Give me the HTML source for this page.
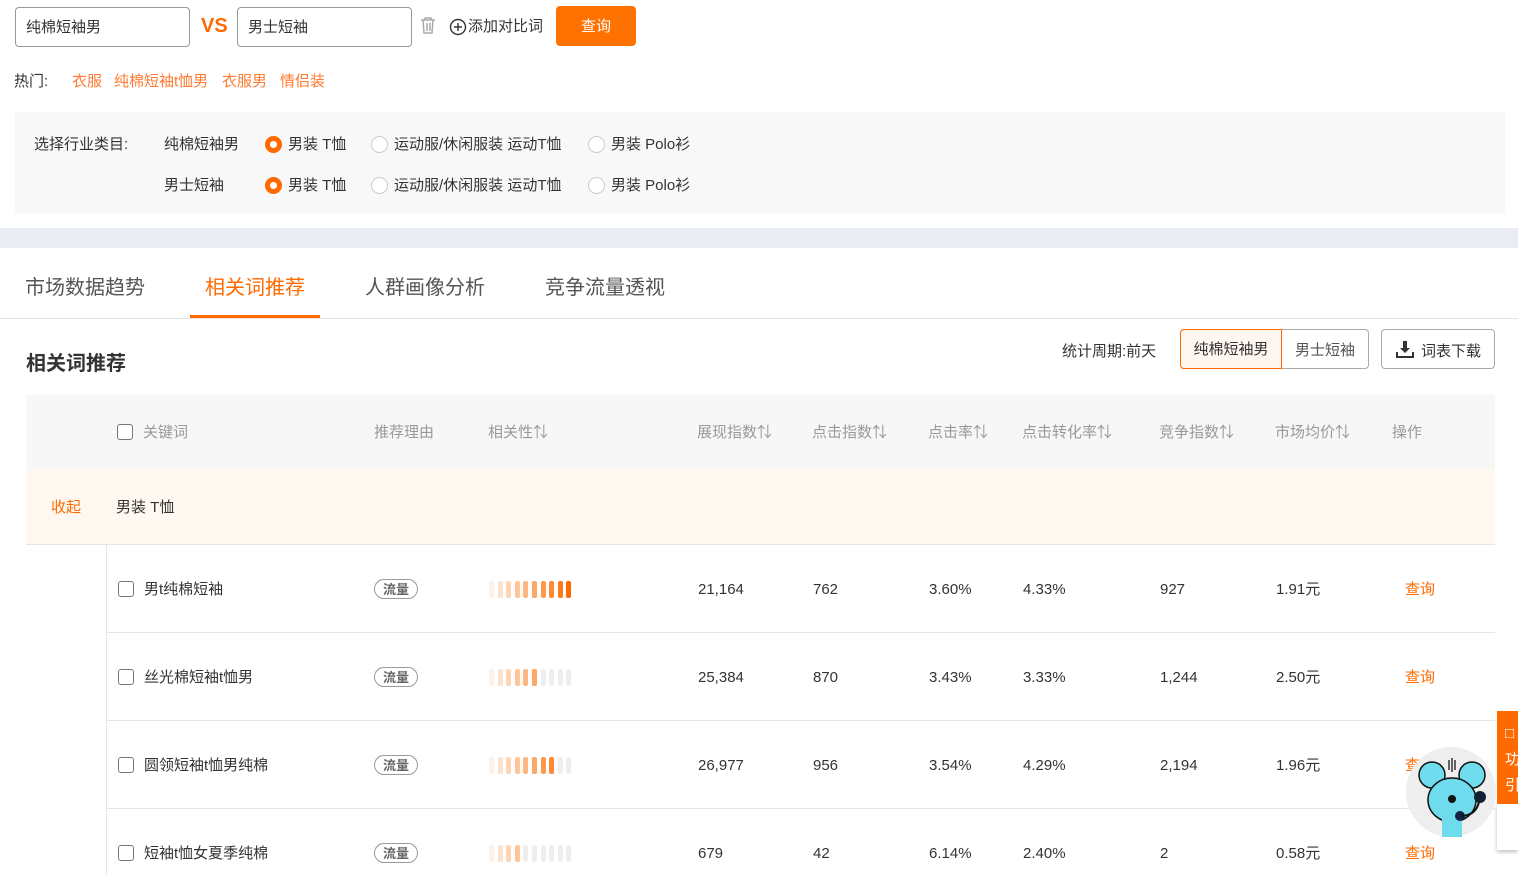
<!DOCTYPE html>
<html><head><meta charset="utf-8"><style>
*{margin:0;padding:0;box-sizing:border-box}
body{width:1518px;height:874px;overflow:hidden;background:#fff;font-family:"Liberation Sans","Noto Sans CJK SC",sans-serif;font-size:15px;line-height:24px;color:#333;position:relative}
.a{position:absolute;white-space:nowrap}
.inp{position:absolute;top:7px;height:40px;width:175px;border:1px solid #999;border-radius:4px;padding:0 10px;line-height:40px;font-size:15px}
.o{color:#ff6a00}
.radio{position:absolute;width:17px;height:17px;border-radius:50%;border:1px solid #ccc;background:#fff}
.radio.on{border:5px solid #ff6a00}
.th{position:absolute;top:421px;color:#999;font-size:15px}
.cb{position:absolute;width:16px;height:16px;border:1px solid #777;border-radius:3px;background:#fff}
.tag{position:absolute;width:44px;height:20px;border:1px solid #999;border-radius:10px;font-size:13px;color:#666;text-align:center;line-height:19px;font-weight:bold}
.bars{position:absolute;height:17px}
.bars i{display:inline-block;width:5px;height:17px;border-radius:2px;margin-right:3.6px;background:#eee;vertical-align:top}
.sep{position:absolute;left:106px;width:1389px;height:1px;background:#e5e5e5}
.t{font-size:20px;line-height:32px}
</style></head><body>
<div class="inp" style="left:15px">纯棉短袖男</div>
<div class="a o" style="left:201px;top:14px;font-size:20px;font-weight:bold">VS</div>
<div class="inp" style="left:237px">男士短袖</div>
<svg class="a" style="left:419px;top:16px" width="18" height="18" viewBox="0 0 18 18" fill="none" stroke="#aaa" stroke-width="1.5"><path d="M2 4h14M6 4V2h6v2M4 4l1 13h8l1-13M8 7v8M11 7v8"/></svg>
<svg class="a" style="left:449px;top:18px" width="18" height="18" viewBox="0 0 18 18" fill="none" stroke="#333" stroke-width="1.4"><circle cx="9" cy="9" r="7.5"/><path d="M9 5v8M5 9h8"/></svg>
<div class="a" style="left:468px;top:15px">添加对比词</div>
<div class="a" style="left:556px;top:6px;width:80px;height:40px;background:#ff7200;border-radius:4px;color:#fff;text-align:center;line-height:42px;font-size:15px">查询</div>
<div class="a" style="left:14px;top:70px">热门:</div>
<div class="a" style="left:72px;top:70px;color:#ff7a30">衣服</div>
<div class="a" style="left:114px;top:70px;color:#ff7a30">纯棉短袖t恤男</div>
<div class="a" style="left:222px;top:70px;color:#ff7a30">衣服男</div>
<div class="a" style="left:280px;top:70px;color:#ff7a30">情侣装</div>
<div class="a" style="left:15px;top:112px;width:1490px;height:102px;background:#f8f8f8"></div>
<div class="a" style="left:34px;top:133px">选择行业类目:</div>
<div class="a" style="left:164px;top:133px">纯棉短袖男</div>
<div class="a" style="left:164px;top:174px">男士短袖</div>
<div class="radio on" style="left:265px;top:136px"></div><div class="a" style="left:288px;top:133px">男装 T恤</div>
<div class="radio" style="left:371px;top:136px"></div><div class="a" style="left:394px;top:133px">运动服/休闲服装 运动T恤</div>
<div class="radio" style="left:588px;top:136px"></div><div class="a" style="left:611px;top:133px">男装 Polo衫</div>
<div class="radio on" style="left:265px;top:177px"></div><div class="a" style="left:288px;top:174px">男装 T恤</div>
<div class="radio" style="left:371px;top:177px"></div><div class="a" style="left:394px;top:174px">运动服/休闲服装 运动T恤</div>
<div class="radio" style="left:588px;top:177px"></div><div class="a" style="left:611px;top:174px">男装 Polo衫</div>
<div class="a" style="left:0;top:228px;width:1518px;height:20px;background:#e9ecf3"></div>
<div class="a t" style="left:25px;top:272px;color:#555">市场数据趋势</div>
<div class="a t o" style="left:205px;top:272px">相关词推荐</div>
<div class="a t" style="left:365px;top:272px;color:#555">人群画像分析</div>
<div class="a t" style="left:545px;top:272px;color:#555">竞争流量透视</div>
<div class="a" style="left:0;top:318px;width:1518px;height:1px;background:#e5e5e5"></div>
<div class="a" style="left:190px;top:315px;width:130px;height:3px;background:#ff6a00"></div>
<div class="a t" style="left:26px;top:348px;font-weight:bold;color:#333">相关词推荐</div>
<div class="a" style="left:1062px;top:340px">统计周期:前天</div>
<div class="a" style="left:1180px;top:329px;width:189px;height:40px;border:1px solid #aaa;border-radius:4px"></div>
<div class="a" style="left:1180px;top:329px;width:102px;height:40px;border:1px solid #ff6a00;border-radius:4px 0 0 4px;background:#fff6f0;text-align:center;line-height:40px">纯棉短袖男</div>
<div class="a" style="left:1295px;top:339px;color:#555">男士短袖</div>
<div class="a" style="left:1381px;top:329px;width:114px;height:40px;border:1px solid #aaa;border-radius:4px"></div>
<svg class="a" style="left:1396px;top:341px" width="18" height="17" viewBox="0 0 18 17" fill="#333"><path d="M7 0h4v7h3l-5 5-5-5h3z"/><path d="M0 11h2v4h14v-4h2v6H0z"/></svg>
<div class="a" style="left:1421px;top:340px">词表下载</div>
<div class="a" style="left:26px;top:395px;width:1469px;height:73px;background:#f7f7f7"></div>
<div class="cb" style="left:117px;top:424px"></div>
<div class="th" style="left:143px">关键词</div>
<div class="th" style="left:374px">推荐理由</div>
<div class="th" style="left:488px">相关性⇅</div>
<div class="th" style="left:697px">展现指数⇅</div>
<div class="th" style="left:812px">点击指数⇅</div>
<div class="th" style="left:928px">点击率⇅</div>
<div class="th" style="left:1022px">点击转化率⇅</div>
<div class="th" style="left:1159px">竞争指数⇅</div>
<div class="th" style="left:1275px">市场均价⇅</div>
<div class="th" style="left:1392px">操作</div>
<div class="a" style="left:26px;top:468px;width:1469px;height:76px;background:#fff8f1"></div>
<div class="a o" style="left:51px;top:496px">收起</div>
<div class="a" style="left:116px;top:496px">男装 T恤</div>
<div class="a" style="left:26px;top:544px;width:1469px;height:1px;background:#e5e5e5"></div>
<div class="a" style="left:106px;top:545px;width:1px;height:329px;background:#e5e5e5"></div>
<div class="sep" style="top:632px"></div><div class="sep" style="top:720px"></div><div class="sep" style="top:808px"></div>

<div class="cb" style="left:118px;top:581px"></div><div class="a" style="left:144px;top:578px">男t纯棉短袖</div><div class="tag" style="left:374px;top:579px">流量</div>
<div class="bars" style="left:489px;top:581px"><i style="background:#fff0e6"></i><i style="background:#ffe2cc"></i><i style="background:#ffd4b3"></i><i style="background:#ffc599"></i><i style="background:#ffb680"></i><i style="background:#ffa766"></i><i style="background:#ff984d"></i><i style="background:#ff8a33"></i><i style="background:#ff7b1a"></i><i style="background:#ff6a00"></i></div>
<div class="a" style="left:698px;top:578px">21,164</div><div class="a" style="left:813px;top:578px">762</div><div class="a" style="left:929px;top:578px">3.60%</div><div class="a" style="left:1023px;top:578px">4.33%</div><div class="a" style="left:1160px;top:578px">927</div><div class="a" style="left:1276px;top:578px">1.91元</div><div class="a o" style="left:1405px;top:578px">查询</div>

<div class="cb" style="left:118px;top:669px"></div><div class="a" style="left:144px;top:666px">丝光棉短袖t恤男</div><div class="tag" style="left:374px;top:667px">流量</div>
<div class="bars" style="left:489px;top:669px"><i style="background:#fff0e6"></i><i style="background:#ffe2cc"></i><i style="background:#ffd4b3"></i><i style="background:#ffc599"></i><i style="background:#ffb680"></i><i style="background:#ffa766"></i><i></i><i></i><i></i><i></i></div>
<div class="a" style="left:698px;top:666px">25,384</div><div class="a" style="left:813px;top:666px">870</div><div class="a" style="left:929px;top:666px">3.43%</div><div class="a" style="left:1023px;top:666px">3.33%</div><div class="a" style="left:1160px;top:666px">1,244</div><div class="a" style="left:1276px;top:666px">2.50元</div><div class="a o" style="left:1405px;top:666px">查询</div>

<div class="cb" style="left:118px;top:757px"></div><div class="a" style="left:144px;top:754px">圆领短袖t恤男纯棉</div><div class="tag" style="left:374px;top:755px">流量</div>
<div class="bars" style="left:489px;top:757px"><i style="background:#fff0e6"></i><i style="background:#ffe2cc"></i><i style="background:#ffd4b3"></i><i style="background:#ffc599"></i><i style="background:#ffb680"></i><i style="background:#ffa766"></i><i style="background:#ff984d"></i><i style="background:#ff8a33"></i><i></i><i></i></div>
<div class="a" style="left:698px;top:754px">26,977</div><div class="a" style="left:813px;top:754px">956</div><div class="a" style="left:929px;top:754px">3.54%</div><div class="a" style="left:1023px;top:754px">4.29%</div><div class="a" style="left:1160px;top:754px">2,194</div><div class="a" style="left:1276px;top:754px">1.96元</div><div class="a o" style="left:1405px;top:754px">查询</div>

<div class="cb" style="left:118px;top:845px"></div><div class="a" style="left:144px;top:842px">短袖t恤女夏季纯棉</div><div class="tag" style="left:374px;top:843px">流量</div>
<div class="bars" style="left:489px;top:845px"><i style="background:#fff0e6"></i><i style="background:#ffe2cc"></i><i style="background:#ffd4b3"></i><i style="background:#ffc599"></i><i></i><i></i><i></i><i></i><i></i><i></i></div>
<div class="a" style="left:698px;top:842px">679</div><div class="a" style="left:813px;top:842px">42</div><div class="a" style="left:929px;top:842px">6.14%</div><div class="a" style="left:1023px;top:842px">2.40%</div><div class="a" style="left:1160px;top:842px">2</div><div class="a" style="left:1276px;top:842px">0.58元</div><div class="a o" style="left:1405px;top:842px">查询</div>

<div class="a" style="left:1497px;top:711px;width:21px;height:93px;background:#ff6a00;color:#fff;font-size:15px;padding:10px 0 0 8px;line-height:26px">□<br>功<br>引</div>
<div class="a" style="left:1497px;top:804px;width:21px;height:46px;background:#fff;box-shadow:0 2px 4px rgba(0,0,0,.25)"></div>
<div class="a" style="left:1406px;top:747px;width:90px;height:90px;border-radius:50%;background:#eee"></div>
<svg class="a" style="left:1416px;top:755px" width="72" height="82" viewBox="0 0 72 82"><circle cx="16" cy="20" r="13" fill="#6fdcee" stroke="#111" stroke-width="1.5"/><circle cx="56" cy="20" r="13" fill="#6fdcee" stroke="#111" stroke-width="1.5"/><ellipse cx="36" cy="45" rx="24" ry="22" fill="#6fdcee" stroke="#111" stroke-width="1.5"/><rect x="26" y="62" width="20" height="20" fill="#6fdcee"/><circle cx="36" cy="44" r="4" fill="#111"/><circle cx="64" cy="42" r="6" fill="#123"/><circle cx="44" cy="61" r="5" fill="#124"/><path d="M63 47Q60 60 46 61" stroke="#111" stroke-width="2" fill="none"/><path d="M33 5v10M36 3v14M39 5v10" stroke="#333" stroke-width="1.5"/></svg>
</body></html>
